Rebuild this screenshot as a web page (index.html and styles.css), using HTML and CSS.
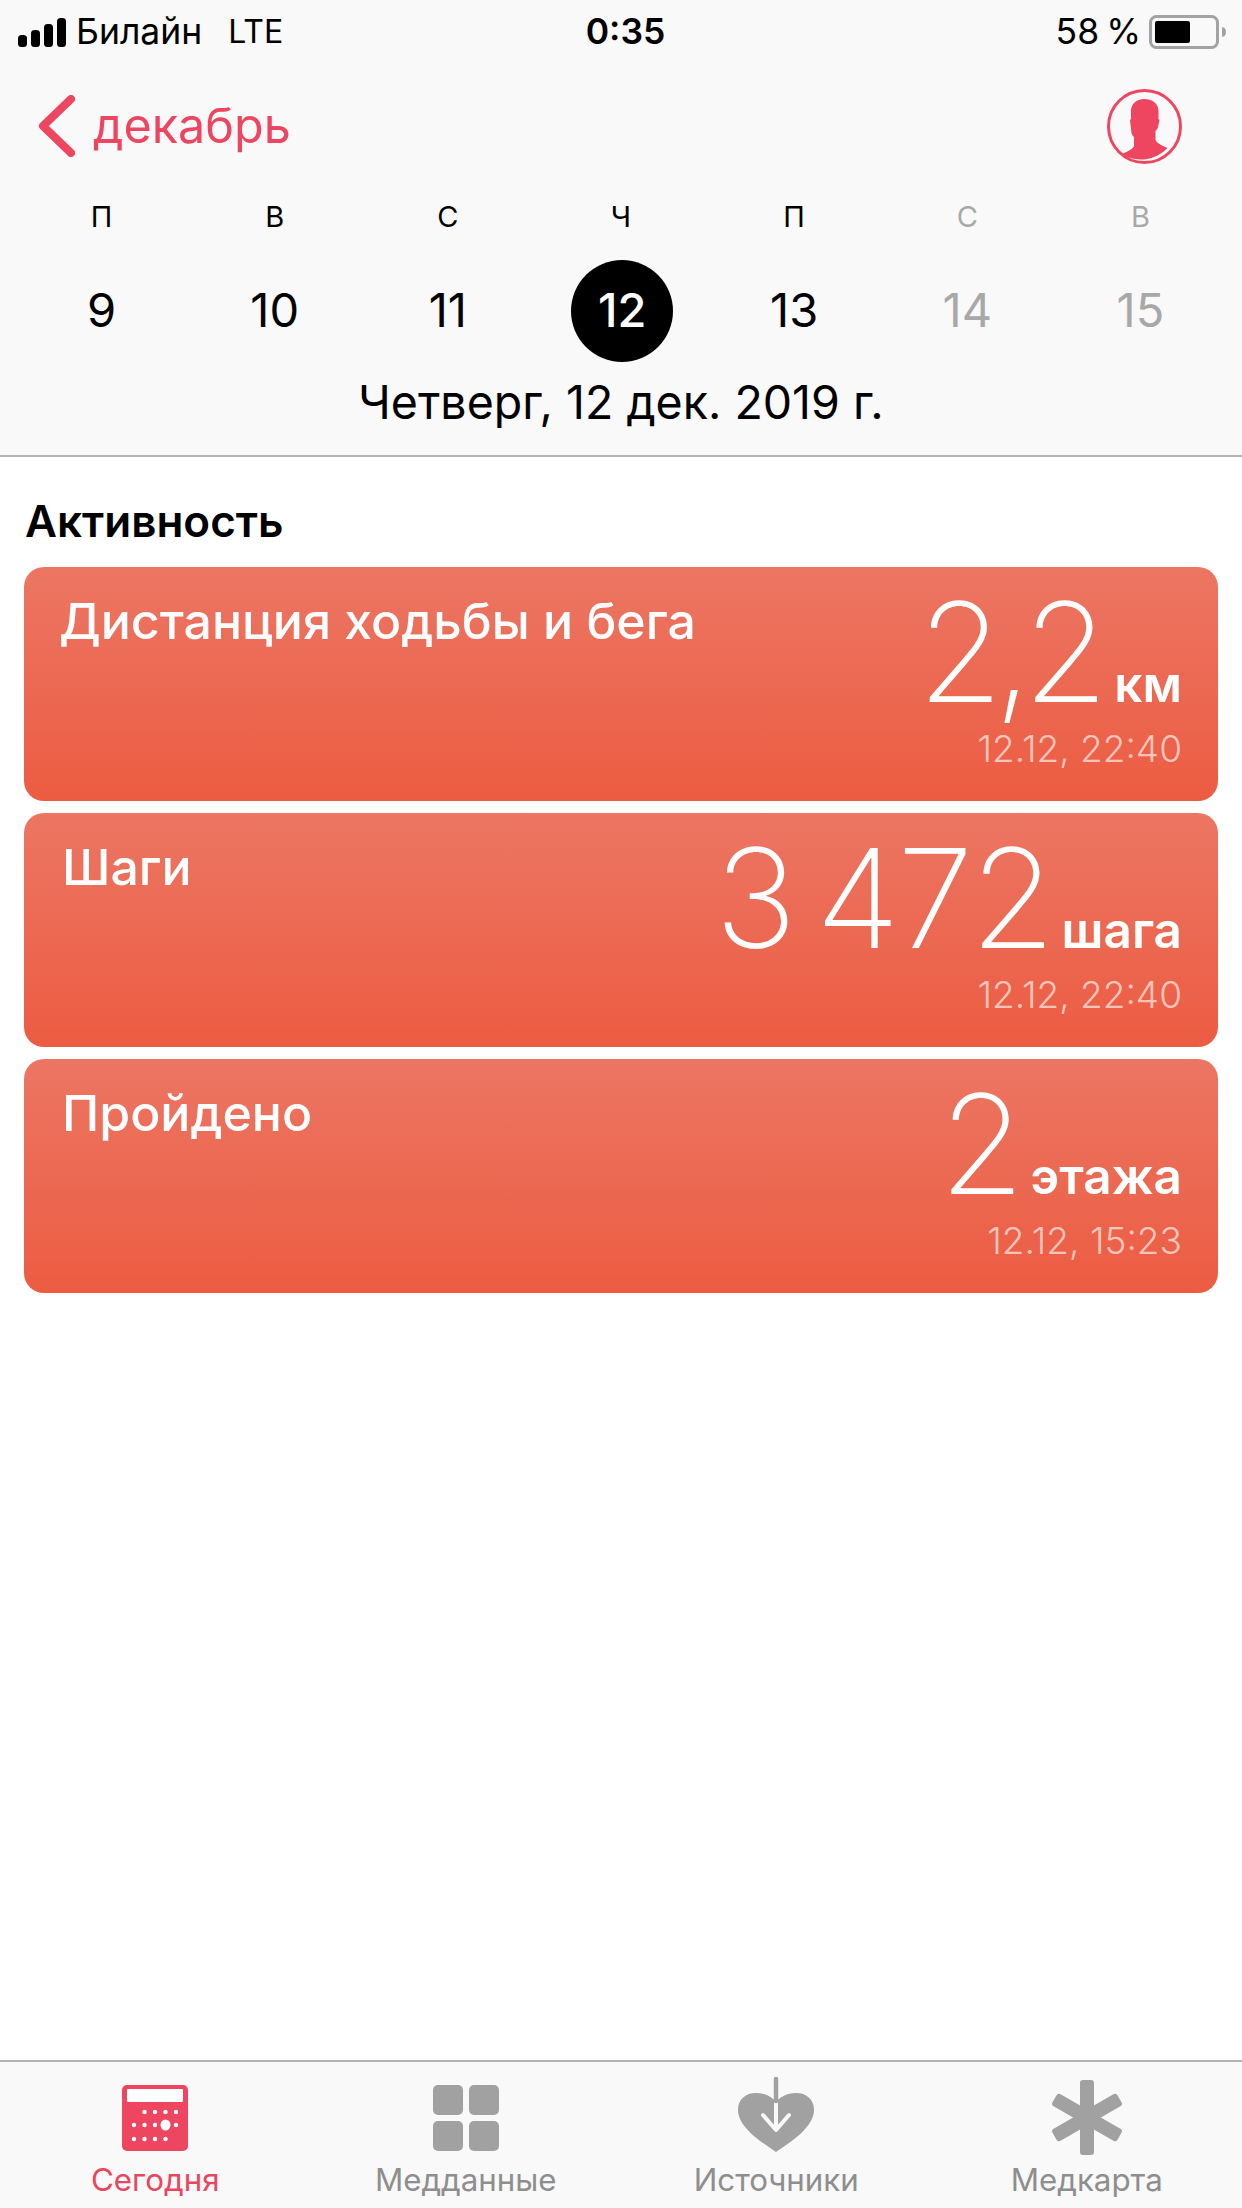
FILE: index.html
```html
<!DOCTYPE html>
<html lang="ru">
<head>
<meta charset="utf-8">
<title>Здоровье</title>
<link rel="stylesheet" href="styles.css">
</head>
<body>
<div class="app">
  <header class="top">
    <div class="status">
      <div class="status-left">
        <svg class="signal" width="48" height="29" viewBox="0 0 48 29"><rect x="0" y="17" width="9" height="12" rx="3.5"/><rect x="13" y="12" width="9" height="17" rx="3.5"/><rect x="26" y="6" width="9" height="23" rx="3.5"/><rect x="39" y="0" width="9" height="29" rx="3.5"/></svg>
        <span class="carrier">Билайн</span>
        <span class="net">LTE</span>
      </div>
      <div class="time">0:35</div>
      <div class="status-right">
        <span class="percent">58 %</span>
        <svg class="battery" width="78" height="34" viewBox="0 0 78 34"><rect x="1.5" y="1.5" width="67" height="31" rx="6" fill="none" stroke="#a3a3a3" stroke-width="3"/><rect x="6" y="6" width="35" height="22" rx="2" fill="#000"/><path d="M73 12c3 .5 4 2.500 4 5s-1 4.500-4 5z" fill="#a3a3a3"/></svg>
      </div>
    </div>
    <div class="nav">
      <div class="back">
        <svg class="chev" width="37" height="62" viewBox="0 0 37 62"><path d="M33 4 5 31l28 27" fill="none" stroke="#ee4660" stroke-width="8" stroke-linecap="round" stroke-linejoin="round"/></svg>
        <span>декабрь</span>
      </div>
      <svg class="avatar" width="75" height="75" viewBox="0 0 75 75"><circle cx="37.500" cy="37.500" r="36" fill="none" stroke="#ee4660" stroke-width="3"/><path fill="#ee4660" d="M37.500 10c8.500 0 14 5 14 12v8l1 1-1.500 7c-.5 2-1.500 3-2.500 4v9c2 4 8 6 12 8A36 36 0 0 1 15 65c4-2 10-4 12-8v-9c-1-1-2-2-2.500-4L23 31l1-1v-8c0-7 5-12 13.500-12z"/></svg>
    </div>
    <div class="week week-letters">
      <span>П</span><span>В</span><span>С</span><span>Ч</span><span>П</span><span class="off">С</span><span class="off">В</span>
    </div>
    <div class="week week-days">
      <span>9</span><span>10</span><span>11</span><span><b class="today">12</b></span><span>13</span><span class="off">14</span><span class="off">15</span>
    </div>
    <div class="date">Четверг, 12 дек. 2019 г.</div>
  </header>

  <main class="content">
    <h2 class="section">Активность</h2>
    <article class="card">
      <h3 class="card-title">Дистанция ходьбы и бега</h3>
      <div class="card-side">
        <div class="value"><span class="num num-decimal">2,2</span><span class="unit">км</span></div>
        <div class="stamp">12.12, 22:40</div>
      </div>
    </article>
    <article class="card">
      <h3 class="card-title inset">Шаги</h3>
      <div class="card-side">
        <div class="value"><span class="num">3 472</span><span class="unit">шага</span></div>
        <div class="stamp">12.12, 22:40</div>
      </div>
    </article>
    <article class="card">
      <h3 class="card-title inset">Пройдено</h3>
      <div class="card-side">
        <div class="value"><span class="num">2</span><span class="unit">этажа</span></div>
        <div class="stamp">12.12, 15:23</div>
      </div>
    </article>
  </main>

  <nav class="tabs">
    <div class="tab active">
      <svg width="80" height="80" viewBox="0 0 80 80"><rect x="7" y="8" width="66" height="66" rx="5" fill="#ee4660"/><rect x="12" y="12" width="56" height="13" fill="#fff" rx="1"/><g fill="#fff"><circle cx="29.500" cy="35" r="2.200"/><circle cx="40" cy="35" r="2.200"/><circle cx="50.500" cy="35" r="2.200"/><circle cx="61" cy="35" r="2.200"/><circle cx="19" cy="48" r="2.200"/><circle cx="29.500" cy="48" r="2.200"/><circle cx="40" cy="48" r="2.200"/><ellipse cx="50.500" cy="48" rx="5" ry="5.500"/><circle cx="61" cy="48" r="2.200"/><circle cx="19" cy="62" r="2.200"/><circle cx="29.500" cy="62" r="2.200"/><circle cx="40" cy="62" r="2.200"/><circle cx="50.500" cy="62" r="2.200"/></g></svg>
      <span>Сегодня</span>
    </div>
    <div class="tab">
      <svg width="80" height="80" viewBox="0 0 80 80"><g fill="#a1a1a1"><rect x="7" y="8" width="30" height="30" rx="5"/><rect x="43" y="8" width="30" height="30" rx="5"/><rect x="7" y="44" width="30" height="30" rx="5"/><rect x="43" y="44" width="30" height="30" rx="5"/></g></svg>
      <span>Медданные</span>
    </div>
    <div class="tab">
      <svg width="80" height="80" viewBox="0 0 80 80"><path fill="#a1a1a1" d="M40 75C25 65 2 50 2 33 2 22 10 16 20 16c9 0 16 4 20 9 4-5 11-9 20-9 10 0 18 6 18 17 0 17-23 32-38 42z"/><path d="M40 24v28M27 38l13 15 13-15" fill="none" stroke="#f9f9f9" stroke-width="4" stroke-linecap="round" stroke-linejoin="round"/><path d="M40 2v22" stroke="#a1a1a1" stroke-width="4.500" stroke-linecap="round"/></svg>
      <span>Источники</span>
    </div>
    <div class="tab">
      <svg width="80" height="80" viewBox="0 0 80 80"><g fill="#a1a1a1"><rect x="33" y="3" width="14" height="75" rx="3"/><rect x="33" y="3" width="14" height="75" rx="3" transform="rotate(60 40 40.500)"/><rect x="33" y="3" width="14" height="75" rx="3" transform="rotate(-60 40 40.500)"/></g></svg>
      <span>Медкарта</span>
    </div>
  </nav>
</div>
</body>
</html>
```
FILE: styles.css
```css
* { box-sizing: border-box; }
html, body { margin: 0; padding: 0; background: #fff; }
body { font-family: Inter, Roboto, "Liberation Sans", sans-serif; color: #000; }
.app { width: 1242px; height: 2208px; display: flex; flex-direction: column; overflow: hidden; }

.top { height: 457px; background: #f9f9f9; border-bottom: 2px solid #b4b4b4; flex: none; }
.status { height: 64px; display: grid; grid-template-columns: 1fr auto 1fr; align-items: center; padding: 0 15px 0 18px; font-size: 35.500px; line-height: 64px; }
.status-left { display: flex; align-items: center; }
.signal { display: block; margin-right: 10px; }
.net { margin-left: 26px; font-size: 32px; }
.time { font-weight: 600; margin-left: 6px; }
.status-right { display: flex; justify-content: flex-end; align-items: center; gap: 8px; }
.percent { word-spacing: -3px; }
.battery { display: block; }

.nav { height: 124px; display: flex; align-items: center; justify-content: space-between; padding: 0 60px 0 38px; }
.back { display: flex; align-items: center; gap: 18px; color: #ee4660; font-size: 48.500px; line-height: 60px; }
.chev, .avatar { display: block; }

.week { display: grid; grid-template-columns: repeat(7, 1fr); padding: 0 15px; text-align: center; }
.week-letters { height: 72px; font-size: 29px; line-height: 58px; }
.week-days { height: 102px; font-size: 47px; line-height: 100px; }
.off { color: #a8a8a8; }
.today { display: block; width: 102px; height: 102px; margin-left: 36.800px; border-radius: 50%; background: #000; color: #fff; font-weight: 500; }
.date { text-align: center; font-size: 46.500px; line-height: 80px; }

.content { flex: 1; padding: 0 24px; }
.section { margin: 0; height: 110px; padding: 0 1px; font-size: 44px; font-weight: 600; line-height: 128px; }
.card { height: 234px; margin-bottom: 12px; border-radius: 20px; background: linear-gradient(#ec7663, #ec5c42); color: #fff; display: flex; justify-content: space-between; padding: 0 36px 0 35px; }
.card-title { margin: 0; font-size: 50px; font-weight: 550; line-height: 108px; }
.card-title.inset { padding-left: 3px; }
.card-side { text-align: right; }
.value { display: flex; align-items: baseline; justify-content: flex-end; gap: 9px; height: 150px; line-height: 170px; }
.num { font-size: 138px; font-weight: 250; letter-spacing: -3px; word-spacing: -14px; }
.num-decimal { letter-spacing: -9px; margin-right: 6px; }
.unit { font-size: 49.500px; font-weight: 600; }
.stamp { font-size: 37px; font-weight: 300; line-height: 64px; color: rgba(255,255,255,.65); }

.tabs { height: 148px; flex: none; background: #f9f9f9; border-top: 2px solid #b4b4b4; display: grid; grid-template-columns: repeat(4, 1fr); }
.tab { display: flex; flex-direction: column; align-items: center; padding-top: 15px; color: #8e8e8e; font-size: 31.300px; line-height: 46px; }
.tab svg { display: block; flex: none; }
.tab.active { color: #e8465f; }
```
